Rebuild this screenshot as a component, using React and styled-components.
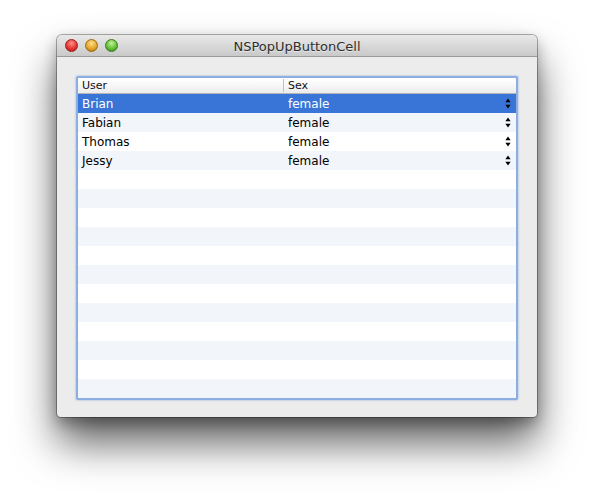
import styled, { createGlobalStyle } from "styled-components";

const GlobalStyle = createGlobalStyle`
    html, body {
        margin: 0;
        padding: 0;
        background: #ffffff;
    }
    body {
        width: 594px;
        height: 496px;
        overflow: hidden;
        font-family: "DejaVu Sans", "Liberation Sans", sans-serif;
    }
`

const people = [
    { name: 'Brian', sex: 'female' },
    { name: 'Fabian', sex: 'female' },
    { name: 'Thomas', sex: 'female' },
    { name: 'Jessy', sex: 'female' },
];

const ROWS = 16;

export default function App(){
    const rows = [];
    for (let i = 0; i < ROWS; i++) {
        rows.push(people[i] || null);
    }

    return(
        <>
            <GlobalStyle />
            <Page>
                <Window>
                    <TitleBar>
                        <Lights>
                            <Light color="red" />
                            <Light color="yellow" />
                            <Light color="green" />
                        </Lights>
                        <Title>NSPopUpButtonCell</Title>
                    </TitleBar>
                    <Content>
                        <Table>
                            <Header>
                                <HeaderCell width="206px" divider>User</HeaderCell>
                                <HeaderCell>Sex</HeaderCell>
                            </Header>
                            <Body>
                                {rows.map((row, index) => (
                                    <Row key={index} selected={index === 0} striped={index % 2 === 1}>
                                        {row && (
                                            <>
                                                <Cell width="206px">{row.name}</Cell>
                                                <Cell grow>
                                                    <span>{row.sex}</span>
                                                    <Arrows>
                                                        <svg width="6" height="11" viewBox="0 0 6 11">
                                                            <path d="M3 0.5 L5.6 4.3 L0.4 4.3 Z" fill="currentColor" />
                                                            <path d="M3 10.5 L5.6 6.7 L0.4 6.7 Z" fill="currentColor" />
                                                        </svg>
                                                    </Arrows>
                                                </Cell>
                                            </>
                                        )}
                                    </Row>
                                ))}
                            </Body>
                        </Table>
                    </Content>
                </Window>
            </Page>
        </>
    );
}

const Page = styled.div`
    width: 594px;
    height: 496px;
    padding: 35px 0 0 57px;
    box-sizing: border-box;
`

const Window = styled.div`
    width: 480px;
    height: 382px;
    background-color: #ececec;
    border-radius: 5px 5px 4px 4px;
    box-shadow: 0 0 0 1px rgba(0, 0, 0, 0.3), 0 26px 42px rgba(0, 0, 0, 0.62), 0 6px 14px rgba(0, 0, 0, 0.3);
    display: flex;
    flex-direction: column;
    overflow: hidden;
`

const TitleBar = styled.div`
    height: 22px;
    flex-shrink: 0;
    position: relative;
    display: flex;
    align-items: center;
    justify-content: center;
    background: linear-gradient(to bottom, #e9e9e9 0%, #d9d9d9 50%, #c9c9c9 100%);
    border-bottom: 1px solid #9a9a9a;
    box-sizing: border-box;
    border-radius: 5px 5px 0 0;
`

const Lights = styled.div`
    position: absolute;
    left: 8px;
    top: 4px;
    display: flex;
    gap: 7px;
`

const lightColors = {
    red: ['#ff8f8a', '#e0322e', '#9a1c1a'],
    yellow: ['#ffe08a', '#e3a126', '#9a6a10'],
    green: ['#c4f29a', '#5dbc33', '#3a7a1c'],
};

const Light = styled.div`
    width: 13px;
    height: 13px;
    border-radius: 50%;
    box-sizing: border-box;
    border: 1px solid ${props => lightColors[props.color][2]};
    background: radial-gradient(circle at 50% 30%, ${props => lightColors[props.color][0]} 0%, ${props => lightColors[props.color][1]} 60%, ${props => lightColors[props.color][2]} 100%);
`

const Title = styled.div`
    font-size: 13px;
    color: #2e2e2e;
    text-shadow: 0 1px 0 rgba(255, 255, 255, 0.5);
    padding-top: 1px;
`

const Content = styled.div`
    flex: 1;
    padding: 19px;
    display: flex;
`

const Table = styled.div`
    flex: 1;
    border: 2px solid #8caee0;
    border-radius: 2px;
    box-shadow: 0 0 2px rgba(80, 130, 210, 0.7);
    background-color: #ffffff;
    display: flex;
    flex-direction: column;
    overflow: hidden;
`

const Header = styled.div`
    height: 16px;
    flex-shrink: 0;
    display: flex;
    background: linear-gradient(to bottom, #ffffff 0%, #f7f7f7 50%, #ececec 100%);
    border-bottom: 1px solid #b5b5b5;
    box-sizing: border-box;
`

const HeaderCell = styled.div`
    width: ${props => props.width || 'auto'};
    flex: ${props => props.width ? '0 0 auto' : '1'};
    font-size: 11px;
    color: #111111;
    padding-left: 4px;
    box-sizing: border-box;
    border-right: ${props => props.divider ? '1px solid #c0c0c0' : 'none'};
    margin: ${props => props.divider ? '1px 0' : '0'};
    line-height: ${props => props.divider ? '13px' : '15px'};
`

const Body = styled.div`
    flex: 1;
    overflow: hidden;
`

const Row = styled.div`
    height: 19px;
    display: flex;
    align-items: center;
    background-color: ${props => props.selected ? '#3875d7' : props.striped ? '#f2f5fa' : '#ffffff'};
    color: ${props => props.selected ? '#ffffff' : '#000000'};
`

const Cell = styled.div`
    width: ${props => props.width || 'auto'};
    flex: ${props => props.grow ? '1' : '0 0 auto'};
    font-size: 12px;
    padding-left: 4px;
    box-sizing: border-box;
    display: flex;
    align-items: center;
    justify-content: space-between;
`

const Arrows = styled.span`
    display: flex;
    color: #000000;
    padding-right: 5px;
`
